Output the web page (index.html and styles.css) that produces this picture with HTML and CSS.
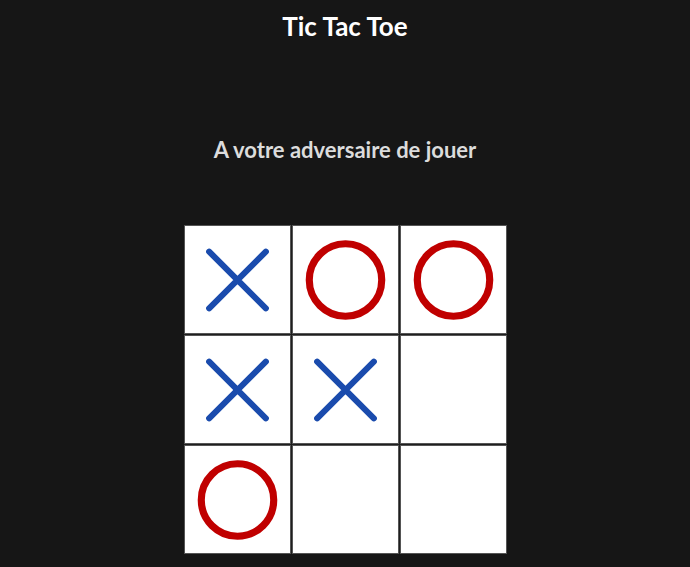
FILE: index.html
```html
<!DOCTYPE html>
<html lang="fr">
<head>
<meta charset="utf-8">
<title>Tic Tac Toe</title>
<link rel="stylesheet" href="styles.css">
</head>
<body>
<main class="app">
  <h1 class="title">Tic Tac Toe</h1>
  <p class="status">A votre adversaire de jouer</p>
  <div class="board">
    <div class="cell"><svg class="mark" viewBox="0 0 100 100"><path class="x" d="M23 23 L77 77 M77 23 L23 77"/></svg></div>
    <div class="cell"><svg class="mark" viewBox="0 0 100 100"><circle class="o" cx="50" cy="50" r="34.5"/></svg></div>
    <div class="cell"><svg class="mark" viewBox="0 0 100 100"><circle class="o" cx="50" cy="50" r="34.5"/></svg></div>
    <div class="cell"><svg class="mark" viewBox="0 0 100 100"><path class="x" d="M23 23 L77 77 M77 23 L23 77"/></svg></div>
    <div class="cell"><svg class="mark" viewBox="0 0 100 100"><path class="x" d="M23 23 L77 77 M77 23 L23 77"/></svg></div>
    <div class="cell"></div>
    <div class="cell"><svg class="mark" viewBox="0 0 100 100"><circle class="o" cx="50" cy="50" r="34.5"/></svg></div>
    <div class="cell"></div>
    <div class="cell"></div>
  </div>
</main>
</body>
</html>
```
FILE: styles.css
```css
html, body {
  margin: 0;
  padding: 0;
  background: #161616;
}
body {
  font-family: Lato, "Noto Sans", sans-serif;
  color: #fff;
}
.app {
  display: flex;
  flex-direction: column;
  align-items: center;
}
.title {
  margin: 11px 0 0;
  font-size: 26px;
  font-weight: 700;
  line-height: 30px;
  color: #ffffff;
}
.status {
  margin: 96px 0 0;
  font-size: 22px;
  font-weight: 700;
  line-height: 26px;
  color: #dcdcdc;
}
.board {
  margin-top: 62px;
  display: grid;
  grid-template-columns: repeat(3, 107px);
  grid-template-rows: repeat(3, 109px);
  gap: 1px;
  background: #1e1e1e;
}
.cell {
  box-sizing: border-box;
  background: #fff;
  border: 1px solid #555;
  display: flex;
  align-items: center;
  justify-content: center;
}
.mark {
  width: 106px;
  height: 106px;
  display: block;
}
.x {
  stroke: #1a4bad;
  stroke-width: 5.8;
  stroke-linecap: round;
  fill: none;
}
.o {
  stroke: #c00000;
  stroke-width: 6.8;
  fill: none;
}
```
